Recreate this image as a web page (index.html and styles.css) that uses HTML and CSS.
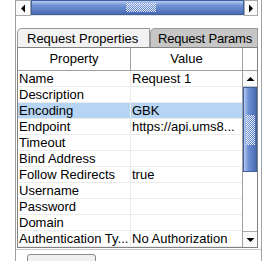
FILE: index.html
```html
<!DOCTYPE html>
<html lang="en">
<head>
    <meta charset="UTF-8">
    <title>Request Properties</title>
    <link rel="stylesheet" href="styles.css">
</head>
<body>
    <div class="panel">
        <div class="hscroll">
            <div class="arrow-btn">
                <svg width="13" height="13" viewBox="0 0 13 13"><path d="M4 6.5 L8 2.5 L8 10.5 Z" fill="#000"/></svg>
            </div>
            <div class="hthumb"><span class="grip"></span></div>
            <div class="arrow-btn small">
                <svg width="12" height="13" viewBox="0 0 12 13"><path d="M8 6.5 L4 2.5 L4 10.5 Z" fill="#000"/></svg>
            </div>
        </div>

        <div class="tabs">
            <div class="tab active">Request Properties</div>
            <div class="tab">Request Params</div>
        </div>

        <div class="table-box">
            <div class="head">
                <div class="hcell prop">Property</div>
                <div class="hcell val">Value</div>
                <div class="hcell corner"></div>
            </div>
            <div class="body">
                <div class="rows">
                    <div class="row"><div class="cell prop">Name</div><div class="cell">Request 1</div></div>
                    <div class="row"><div class="cell prop">Description</div><div class="cell"></div></div>
                    <div class="row selected"><div class="cell prop">Encoding</div><div class="cell">GBK</div></div>
                    <div class="row"><div class="cell prop">Endpoint</div><div class="cell">https://api.ums8...</div></div>
                    <div class="row"><div class="cell prop">Timeout</div><div class="cell"></div></div>
                    <div class="row"><div class="cell prop">Bind Address</div><div class="cell"></div></div>
                    <div class="row"><div class="cell prop">Follow Redirects</div><div class="cell">true</div></div>
                    <div class="row"><div class="cell prop">Username</div><div class="cell"></div></div>
                    <div class="row"><div class="cell prop">Password</div><div class="cell"></div></div>
                    <div class="row"><div class="cell prop">Domain</div><div class="cell"></div></div>
                    <div class="row"><div class="cell prop">Authentication Ty...</div><div class="cell">No Authorization</div></div>
                </div>
                <div class="vscroll">
                    <div class="varrow">
                        <svg width="13" height="14" viewBox="0 0 13 14"><path d="M6.5 5 L10.5 9 L2.5 9 Z" fill="#000"/></svg>
                    </div>
                    <div class="vthumb"><span class="vgrip"></span></div>
                    <div class="vtrack"></div>
                    <div class="varrow">
                        <svg width="13" height="14" viewBox="0 0 13 14"><path d="M6.5 9 L10.5 5 L2.5 5 Z" fill="#000"/></svg>
                    </div>
                </div>
            </div>
        </div>

        <div class="footer">
            <div class="button"></div>
        </div>
    </div>
</body>
</html>
```

FILE: styles.css
```css
body {
    margin: 0;
    background-color: #fff;
    font-family: "Liberation Sans", Arial, sans-serif;
    font-size: 13px;
    color: #000;
}
.panel {
    margin-left: 15px;
    width: 245px;
    height: 261px;
    border-left: 1px solid #a0a0a0;
    border-right: 1px solid #a0a0a0;
    display: flex;
    flex-direction: column;
    overflow: hidden;
}
.hscroll {
    display: flex;
    height: 15px;
    width: 242px;
    border-bottom: 1px solid #e3e3e3;
}
.arrow-btn {
    width: 14px;
    height: 14px;
    border: 1px solid #a9a9a9;
    border-left: none;
    background-color: #fafafa;
    display: flex;
    align-items: center;
    justify-content: center;
}
.arrow-btn.small {
    width: 12px;
    border-left: 1px solid #a9a9a9;
}
.hthumb {
    flex: 1;
    border: 1px solid #3f5f9f;
    background: linear-gradient(#b8cbf0, #6f91d4 35%, #5577c0 80%, #4a6aae);
    display: flex;
    align-items: center;
    justify-content: center;
}
.grip {
    width: 30px;
    height: 9px;
    margin-left: 6px;
    background: repeating-conic-gradient(#e6eefb 0 25%, transparent 0 50%) 0 0 / 2px 2px;
}
.tabs {
    display: flex;
    margin-top: 12px;
    margin-left: 1px;
    height: 19px;
}
.tab {
    box-sizing: border-box;
    height: 19px;
    padding: 1px 0 0 7px;
    border: 1px solid #999;
    border-bottom: none;
    border-top-left-radius: 5px;
    background-color: #c6c6c6;
    line-height: 17px;
    width: 108px;
    white-space: nowrap;
    overflow: hidden;
    letter-spacing: -0.2px;
}
.tab.active {
    width: 133px;
    padding-left: 9px;
    letter-spacing: 0;
    background-color: #f2f2f2;
}
.table-box {
    margin-left: 1px;
    width: 239px;
    height: 202px;
    border: 1px solid #828282;
    display: flex;
    flex-direction: column;
}
.head {
    display: flex;
    height: 22px;
    border-bottom: 1px solid #a0a0a0;
}
.hcell {
    text-align: center;
    line-height: 22px;
    border-right: 1px solid #a0a0a0;
}
.hcell.prop {
    width: 112px;
}
.hcell.val {
    width: 111px;
}
.hcell.corner {
    flex: 1;
    border-right: none;
}
.body {
    flex: 1;
    display: flex;
}
.rows {
    width: 224px;
    border-right: 1px solid #a0a0a0;
}
.row {
    display: flex;
    height: 15px;
    border-bottom: 1px solid #ebebeb;
    line-height: 15px;
}
.row.selected {
    background-color: #b6d5f4;
}
.cell {
    flex: 1;
    padding-left: 1px;
    white-space: nowrap;
    overflow: hidden;
}
.cell.prop {
    flex: none;
    width: 111px;
    border-right: 1px solid #ebebeb;
}
.vscroll {
    flex: 1;
    display: flex;
    flex-direction: column;
}
.varrow {
    height: 15px;
    border-bottom: 1px solid #c8c8c8;
    display: flex;
    align-items: center;
    justify-content: center;
    background-color: #fafafa;
}
.varrow:last-child {
    border-bottom: none;
    border-top: 1px solid #a9a9a9;
}
.vthumb {
    height: 83px;
    border: 1px solid #3f5f9f;
    background: linear-gradient(90deg, #b8cbf0, #6f91d4 35%, #5577c0 80%, #4a6aae);
    display: flex;
    align-items: center;
    justify-content: center;
}
.vgrip {
    width: 9px;
    height: 30px;
    background: repeating-conic-gradient(#e6eefb 0 25%, transparent 0 50%) 0 0 / 2px 2px;
}
.vtrack {
    flex: 1;
    background-color: #fff;
}
.footer {
    flex: 1;
    border-top: 1px solid #c8c8c8;
    margin-top: 1px;
    padding: 4px 0 0 11px;
}
.button {
    width: 67px;
    height: 20px;
    border: 1px solid #8a8a8a;
    border-radius: 3px;
    background-color: #f0f0f0;
}
```
